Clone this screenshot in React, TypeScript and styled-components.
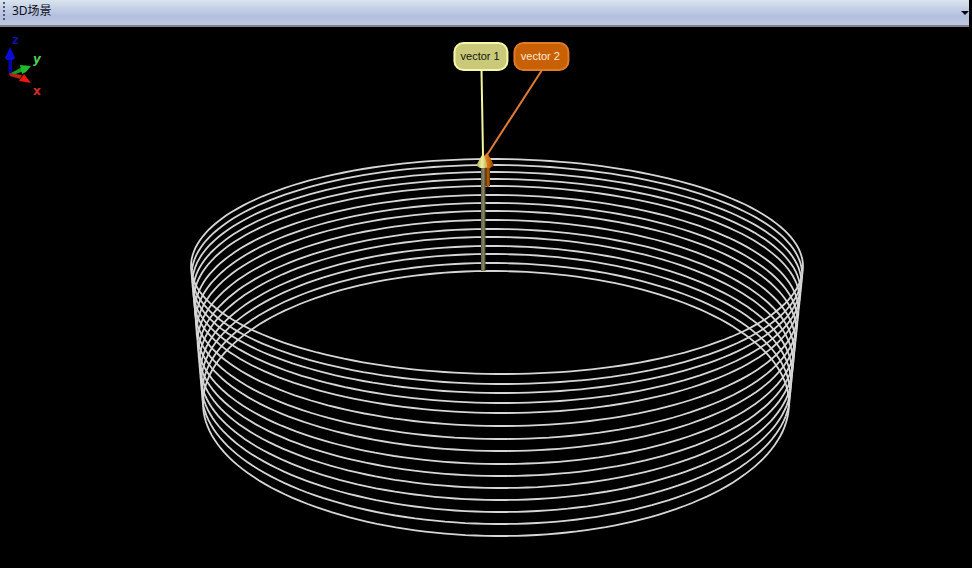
import React from "react";
import styled, { createGlobalStyle } from "styled-components";

const GlobalStyle = createGlobalStyle`
  * { box-sizing: border-box; }
  html, body, #root { height: 100%; }
  body { margin: 0; background: #000; overflow: hidden; }
`;

const Panel = styled.section`
  display: flex;
  flex-direction: column;
  height: 100%;
  background: #000;
`;

const TitleBar = styled.header`
  display: flex;
  align-items: center;
  flex: none;
  height: 27px;
  margin-right: 3px;
  padding: 0 0 4px 3px;
  gap: 7px;
  background: linear-gradient(#dbe5ee, #c3cee6 35%, #b4bfdf 65%, #bfc7e0);
  border-bottom: 2px solid #80818c;
`;

const Grip = styled.span`
  width: 2px;
  height: 18px;
  background: repeating-linear-gradient(#4c5877 0 2px, transparent 2px 4px);
`;

const Title = styled.h1`
  flex: 1;
  margin: 0;
  color: #0c0f18;
  font: 400 12px/16px "Noto Sans", "Noto Sans CJK SC", sans-serif;
`;

const MenuButton = styled.button`
  display: flex;
  align-items: flex-end;
  justify-content: flex-end;
  width: 16px;
  height: 18px;
  padding: 0 0 5px;
  border: 0;
  background: none;
`;

const Viewport = styled.main`
  position: relative;
  flex: 1;
  min-height: 0;
`;

const Scene = styled.svg`
  display: block;
  width: 100%;
  height: 100%;
`;

const Tag = styled.div<{ $x: number; $fill: string; $edge: string; $ink: string }>`
  position: absolute;
  top: 15px;
  left: ${(p) => p.$x}%;
  transform: translateX(-50%);
  padding: 5px 7px 5px 5px;
  border: 2px solid ${(p) => p.$edge};
  border-radius: 10px;
  background: ${(p) => p.$fill};
  color: ${(p) => p.$ink};
  font: 400 11px/15px "Liberation Sans", sans-serif;
  white-space: nowrap;
`;

const backs = [159, 165, 172, 179, 186, 195, 203, 211, 220, 229, 237, 246, 254, 263, 271];
const fronts = [374, 384, 393, 403, 413, 426, 439, 451, 464, 476, 488, 500, 512, 524, 536];

function turnPath(back: number, front: number) {
  const cy = (back + front) / 2;
  const ry = (front - back) / 2;
  const t = (cy - 266.5) / 137;
  const cx = 497 - t;
  const rx = 306 - 13 * t;
  const points: string[] = [];
  for (let i = 0; i < 180; i++) {
    const a = (i / 180) * Math.PI * 2;
    const x = rx * Math.cos(a);
    const y = cy + ry * Math.sin(a) + x * 0.007 * Math.abs(Math.sin(a));
    points.push(`${(cx + x).toFixed(1)} ${y.toFixed(1)}`);
  }
  return `M${points.join("L")}Z`;
}

export default function App() {
  return (
    <>
      <GlobalStyle />
      <Panel>
        <TitleBar>
          <Grip />
          <Title>3D场景</Title>
          <MenuButton aria-label="Panel menu">
            <svg width="8" height="4" viewBox="0 0 8 4"><path d="M0 0H8L4 4Z" fill="#05070c" /></svg>
          </MenuButton>
        </TitleBar>
        <Viewport>
          <Scene viewBox="0 27 972 541" role="img" aria-label="3D coil with two vectors">
            <defs>
              <linearGradient id="shaft"><stop stopColor="#55563c" /><stop offset=".5" stopColor="#8b8b68" /><stop offset="1" stopColor="#45462f" /></linearGradient>
              <linearGradient id="cone"><stop stopColor="#b4b456" /><stop offset=".5" stopColor="#efef9c" /><stop offset="1" stopColor="#c0b05c" /></linearGradient>
              <linearGradient id="cone2"><stop stopColor="#f58a28" /><stop offset=".6" stopColor="#c96808" /><stop offset="1" stopColor="#783800" /></linearGradient>
            </defs>
            <g fill="none" stroke="#d6d6d6" strokeWidth="1.8">
              {backs.map((b, i) => <path key={b} d={turnPath(b, fronts[i])} />)}
            </g>
            <path d="M485 166H490V186L487.500 187L485 186Z" fill="#7a3c05" />
            <path d="M487 167H489V186H487Z" fill="#a75508" />
            <path d="M487 153L489 156L493.500 164V166L490 168H484V156Z" fill="url(#cone2)" />
            <path d="M481 166H485.500V271H481Z" fill="url(#shaft)" />
            <path d="M482 155H484L487 164V167L485 168H480L477 166V164Z" fill="url(#cone)" />
            <path d="M481.500 70L483 155" stroke="#f4f4a4" strokeWidth="2" />
            <path d="M542 70L487 155" stroke="#e07c38" strokeWidth="2" />
            <path d="M8.500 58H12V73H8.500Z" fill="#0505a8" />
            <path d="M10 47L15 58L13 60H7L5 58Z" fill="#0b0bd8" />
            <path d="M11 73L22 67L24 71L13 75Z" fill="#179b22" />
            <path d="M20 65L31 66L26 72L22 74Z" fill="#22b92b" />
            <path d="M9 73L22 75L20 79L10 76Z" fill="#ba2415" />
            <path d="M24 74L31 83L19 81Z" fill="#f01808" />
            <g fontFamily="DejaVu Sans, sans-serif" fontWeight="700" fontSize="12">
              <text x="12" y="44" fill="#101096">z</text>
              <text x="33" y="63" fill="#50d054" fontStyle="italic">y</text>
              <text x="33" y="95" fill="#d82b24">x</text>
            </g>
          </Scene>
          <Tag $x={49.500} $fill="#c9c979" $edge="#f7f7ac" $ink="#14140c">vector 1</Tag>
          <Tag $x={55.700} $fill="#c76104" $edge="#e07b2a" $ink="#ffe9cf">vector 2</Tag>
        </Viewport>
      </Panel>
    </>
  );
}
